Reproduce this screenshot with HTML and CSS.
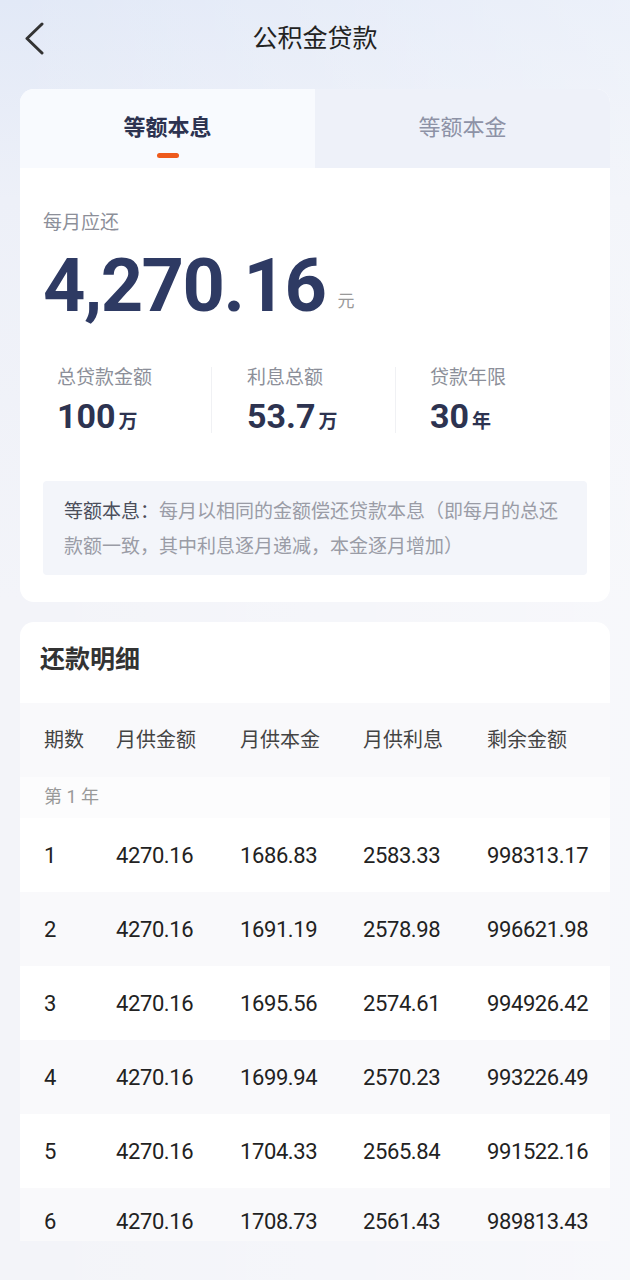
FILE: index.html
```html
<!DOCTYPE html>
<html lang="zh">
<head>
<meta charset="utf-8">
<title>公积金贷款</title>
<link rel="stylesheet" href="styles.css">
</head>
<body>
<div class="page">
  <header class="topbar">
    <svg class="back" width="24" height="34" viewBox="0 0 24 34"><path d="M18 3 L3 17.5 L18 32" fill="none" stroke="#333" stroke-width="3" stroke-linecap="round" stroke-linejoin="round"/></svg>
    <h1 class="title">公积金贷款</h1>
  </header>

  <section class="card summary">
    <div class="tabs">
      <div class="tab active">等额本息<span class="indicator"></span></div>
      <div class="tab">等额本金</div>
    </div>
    <div class="summary-body">
      <div class="label">每月应还</div>
      <div class="amount"><span class="big">4,270.16</span><span class="unit">元</span></div>
      <div class="stats">
        <div class="stat s1">
          <div class="stat-label">总贷款金额</div>
          <div class="stat-value">100<span class="stat-unit">万</span></div>
        </div>
        <div class="stat s2">
          <div class="stat-label">利息总额</div>
          <div class="stat-value">53.7<span class="stat-unit">万</span></div>
        </div>
        <div class="stat s3">
          <div class="stat-label">贷款年限</div>
          <div class="stat-value">30<span class="stat-unit">年</span></div>
        </div>
      </div>
      <div class="note"><span class="note-key">等额本息：</span>每月以相同的金额偿还贷款本息（即每月的总还款额一致，其中利息逐月递减，本金逐月增加）</div>
    </div>
  </section>

  <section class="card detail">
    <h2 class="detail-title">还款明细</h2>
    <div class="row head"><span>期数</span><span>月供金额</span><span>月供本金</span><span>月供利息</span><span>剩余金额</span></div>
    <div class="year">第 1 年</div>
    <div class="row"><span>1</span><span>4270.16</span><span>1686.83</span><span>2583.33</span><span>998313.17</span></div>
    <div class="row alt"><span>2</span><span>4270.16</span><span>1691.19</span><span>2578.98</span><span>996621.98</span></div>
    <div class="row"><span>3</span><span>4270.16</span><span>1695.56</span><span>2574.61</span><span>994926.42</span></div>
    <div class="row alt"><span>4</span><span>4270.16</span><span>1699.94</span><span>2570.23</span><span>993226.49</span></div>
    <div class="row"><span>5</span><span>4270.16</span><span>1704.33</span><span>2565.84</span><span>991522.16</span></div>
    <div class="row alt last"><span>6</span><span>4270.16</span><span>1708.73</span><span>2561.43</span><span>989813.43</span></div>
  </section>
</div>
</body>
</html>
```

FILE: styles.css
```css
* { box-sizing: border-box; margin: 0; padding: 0; }
html, body { width: 630px; height: 1280px; overflow: hidden; }
body {
  font-family: Roboto, "Noto Sans CJK SC", sans-serif;
  background: linear-gradient(180deg, #e2e9f7 0px, #edf0f8 200px, #f3f4f9 600px, #f3f4f9 100%);
  color: #222;
}
.page {
  position: relative;
  min-height: 1280px;
  padding: 0 20px;
  background: linear-gradient(90deg, rgba(255,255,255,0) 0%, rgba(255,255,255,0.35) 100%);
}
.topbar {
  height: 89px;
  display: flex;
  align-items: center;
  justify-content: center;
  position: relative;
  padding-bottom: 18px;
}
.back { position: absolute; left: 4px; top: 21px; }
.title { font-size: 25px; font-weight: 400; color: #222; letter-spacing: 0; }

.card { background: #fff; border-radius: 14px; overflow: hidden; }
.summary { margin-bottom: 20px; }
.tabs { display: flex; height: 79px; }
.tab {
  flex: 0 0 295px;
  display: flex; align-items: center; justify-content: center;
  font-size: 22px; color: #8d92a6; background: #eef1f9;
  position: relative; padding-bottom: 7px;
}
.tab.active { background: #f8fafe; color: #2d3350; font-weight: 700; }
.indicator {
  position: absolute; left: 137px; top: 64px;
  width: 22px; height: 5px; border-radius: 3px; background: #ee5a1c;
}
.summary-body { padding: 42px 23px 27px 23px; }
.label { font-size: 19px; color: #8c8f99; line-height: 26px; }
.amount { display: flex; align-items: baseline; margin-top: 8px; height: 84px; }
.big { font-size: 74px; font-weight: 700; color: #2e3a63; letter-spacing: -1.5px; line-height: 84px; }
.unit { font-size: 17px; color: #999; margin-left: 12px; position: relative; top: -4px; }
.stats { display: flex; margin-top: 39px; height: 66px; }
.stat { display: flex; flex-direction: column; }
.s1 { width: 169px; padding-left: 14px; border-right: 1px solid #f0f1f4; }
.s2 { width: 184px; padding-left: 35px; border-right: 1px solid #f0f1f4; }
.s3 { flex: 1; padding-left: 34px; }
.stat-label { font-size: 19px; color: #8c8f99; line-height: 22px; }
.stat-value { font-size: 34px; font-weight: 700; color: #2d3350; line-height: 40px; margin-top: 7px; }
.stat-unit { font-size: 19px; margin-left: 3px; }
.note {
  margin-top: 48px;
  background: #f3f5fa;
  border-radius: 4px;
  padding: 11px 24px 13px 21px;
  font-size: 19px; line-height: 35px; color: #9a9ca6;
  font-family: "Noto Sans CJK SC", sans-serif;
}
.note-key { color: #4b4e5a; }

.detail { border-radius: 14px 14px 0 0; }
.detail-title { font-size: 25px; font-weight: 700; color: #333; padding: 20px 20px 0; height: 81px; line-height: 36px; }
.row { display: grid; grid-template-columns: 72px 124px 123px 124px 1fr; padding-left: 24px; height: 74px; align-items: center; font-size: 22px; letter-spacing: -0.4px; color: #222; }
.row.alt { background: #f9f9fb; }
.row.head { background: #f9f9fb; font-size: 20px; letter-spacing: 0; color: #444; font-family: "Noto Sans CJK SC", sans-serif; padding-bottom: 4px; }
.row.last { height: 53px; align-items: start; padding-top: 21px; }
.year { height: 41px; line-height: 40px; padding-left: 24px; font-size: 18px; color: #999; background: #fcfcfd; }
```
